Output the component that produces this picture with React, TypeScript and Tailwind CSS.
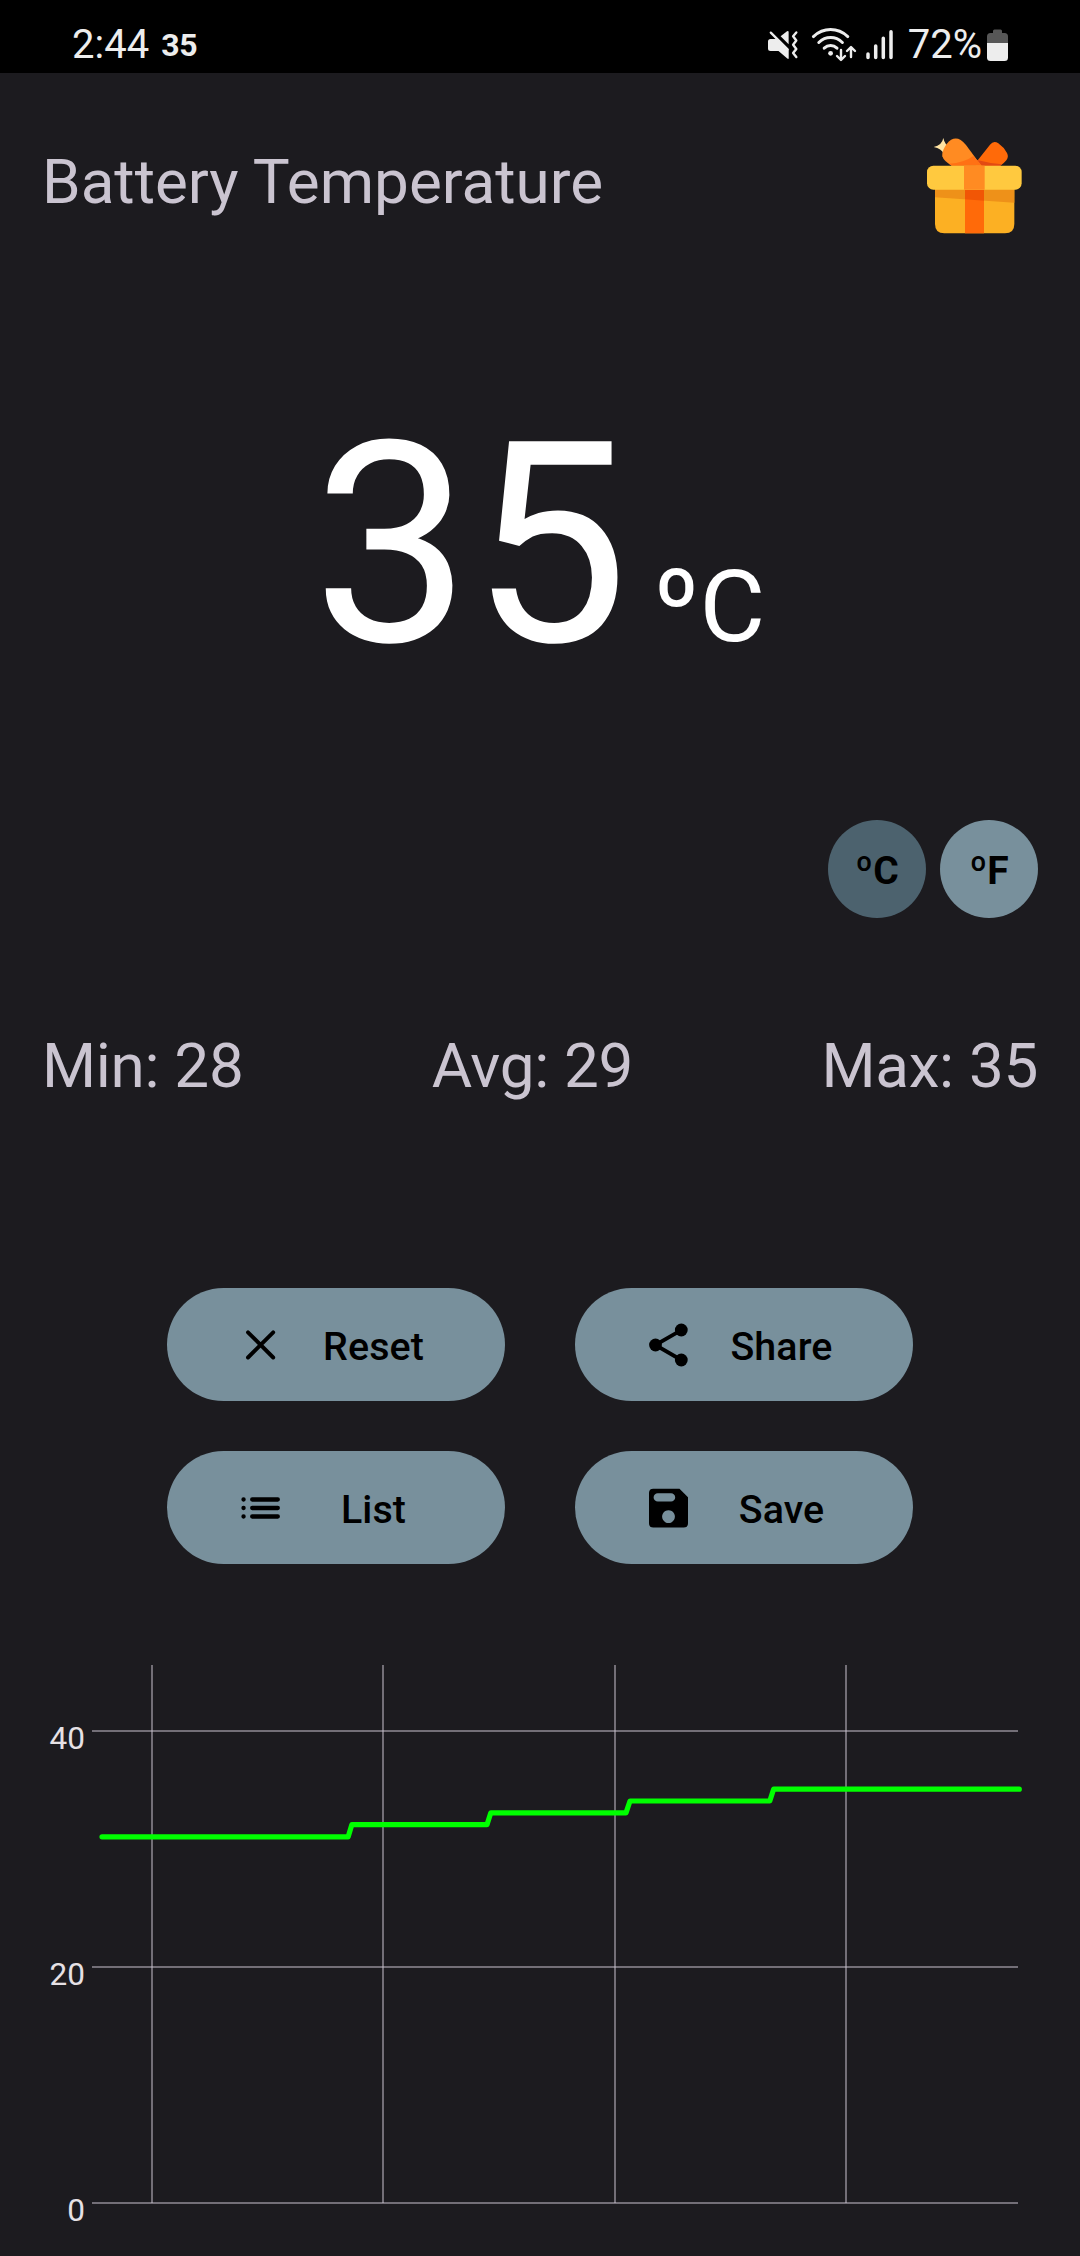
import type { ReactNode } from "react";

const stats = ["Min: 28", "Avg: 29", "Max: 35"];

const gridX = [152, 383, 615, 846];

const gridY = [
  { label: "40", y: 1731 },
  { label: "20", y: 1967 },
  { label: "0", y: 2203 },
];

const readings =
  "102,1836.8 348.2,1836.8 351.8,1824.7 487,1824.7 490.8,1812.8 626,1812.8 630,1801 769.8,1801 773.6,1789.2 1019.3,1789.2";

function StatusIcons() {
  return (
    <svg className="h-[38px] w-[132px]" viewBox="764 26 132 38" fill="none" stroke="#ededed" strokeLinecap="round">
      {/* muted, vibrate */}
      <g fill="#ededed" stroke="none">
        <path d="M780.6 36.3 787 31.300q1.600-1 1.600.8v12.200z" />
        <path d="M770.500 39H777.500L788.700 49.600V58q0 1.600-1.400.6L778.500 51h-8q-2.500 0-2.500-2.500v-7q0-2.500 2.500-2.500z" />
      </g>
      <path d="M770.8 32.6 787.600 49.400" strokeWidth="2.300" />
      <path d="M796.3 32.5l-3.2 3.8 3.2 4.2-3.2 4.2 3.2 4.2-3.2 4.2 3.2 4" strokeWidth="2.4" strokeLinejoin="round" />

      {/* wifi */}
      <g strokeWidth="3">
        <path d="M813.4 36.6Q821 29.6 830.6 29.6T847.8 36.6" />
        <path d="M818.8 42.5Q824 37.6 830.6 37.6T842.4 42.5" />
        <path d="M824.2 48.2Q827 45.6 830.6 45.6T837 48.2" />
      </g>
      <circle cx="830.6" cy="53.3" r="2.4" fill="#ededed" stroke="none" />
      <g strokeWidth="2.4" strokeLinejoin="round">
        <path d="M841 50v9.6M837 56l4 4 4-4" />
        <path d="M851 57V47.4M847 51l4-4 4 4" />
      </g>

      {/* signal */}
      <path d="M868 54v3.4M875.7 46v11.4M883.3 38.3v19.1M891 31.7v25.7" strokeWidth="3.5" />
    </svg>
  );
}

function BatteryLevel() {
  return (
    <svg className="h-8 w-[21px]" viewBox="987 29 21 32">
      <path d="M993 33v-2q0-1.5 1.5-1.5h6q1.5 0 1.5 1.5v2h2.5q3.5 0 3.5 3.5V43h-21v-6.500q0-3.500 3.500-3.500z" fill="#575757" />
      <path d="M987 43h21v14.500q0 3.500-3.500 3.500h-14q-3.500 0-3.500-3.500z" fill="#ededed" />
    </svg>
  );
}

function Gift() {
  return (
    <svg className="h-[97px] w-24" viewBox="81 49 288 291">
      <path d="M130 52q4 20 20 28-16 6-20 18-5-14-29-19 25-5 29-27z" fill="#ffe4a3" />
      <path d="M232 120l38-48q11-14 25-4 16 11 26 29 6 12-2 22-6 8-18 16h-70z" fill="#ff6a09" />
      <path d="M232 118q36 10 74 13l-7 5h-72z" fill="#e34a12" />
      <path d="M155 135q-24-14-28-28-2-16 13-37 20-25 42-12 9 6 16 15l46 62z" fill="#ff8b22" />
      <path d="M155 135l-8-6q45-2 73-23l26 29z" fill="#ff7114" />
      <path d="M105 200h238v110q0 28-28 28H133q-28 0-28-28z" fill="#fcb023" />
      <path d="M105 200h238v46l-238-16z" fill="#ee9119" />
      <path d="M195 200h57v138h-57z" fill="#ff6a09" />
      <path d="M195 200h57v40l-57-4z" fill="#f15605" />
      <rect x="81" y="135" width="284" height="72" rx="19" fill="#ffc93f" />
      <path d="M192 135h62v72h-62z" fill="#ff8b22" />
    </svg>
  );
}

const actions: { label: string; icon: ReactNode }[] = [
  {
    label: "Reset",
    icon: <path d="M13 13.300 38.200 38.500M38.200 13.300 13 38.500" fill="none" stroke="#000" strokeWidth="3.900" strokeLinecap="round" />,
  },
  {
    label: "Share",
    icon: (
      <>
        <path d="M38.300 11.200 12.300 26l26 15" fill="none" stroke="#000" strokeWidth="3.800" />
        <circle cx="38.300" cy="11" r="6.400" />
        <circle cx="12.500" cy="26" r="6.400" />
        <circle cx="38.300" cy="41" r="6.400" />
      </>
    ),
  },
  {
    label: "List",
    icon: (
      <g stroke="#000" strokeWidth="4.300" strokeLinecap="round">
        <path d="M8.500 17.500h.1M8.500 26h.1M8.500 34.500h.1" />
        <path d="M17.200 17.500h25.600M17.200 26h25.600M17.200 34.500h25.600" />
      </g>
    ),
  },
  {
    label: "Save",
    icon: (
      <path
        fillRule="evenodd"
        d="M10.300 6.800H36.500L45 15.300V41.200q0 4.300-4.300 4.300H10.300Q6 45.500 6 41.200V11.100Q6 6.800 10.300 6.800zM14.800 11.200a4.200 4.200 0 0 0 0 8.400H28a4.200 4.200 0 0 0 0-8.400zM25.500 28.200a6.400 6.400 0 1 0 .01 0z"
      />
    ),
  },
];

function Chart() {
  return (
    <svg className="mt-[86px] block h-[606px] w-full" viewBox="0 1650 1080 606">
      <g stroke="#cac4d0" strokeOpacity="0.5" strokeWidth="2">
        {gridY.map(({ y }) => (
          <line key={y} x1="92" x2="1018" y1={y} y2={y} />
        ))}
        {gridX.map((x) => (
          <line key={x} x1={x} x2={x} y1="1665" y2="2203" />
        ))}
      </g>
      {gridY.map(({ label, y }) => (
        <text key={label} x="85" y={y + 18} textAnchor="end" fontSize="31.500" fill="#e6e1e5">
          {label}
        </text>
      ))}
      <polyline points={readings} fill="none" stroke="#00ff00" strokeWidth="5.200" strokeLinecap="round" strokeLinejoin="round" />
    </svg>
  );
}

export default function App() {
  return (
    <div className="h-[2256px] w-[1080px] overflow-hidden bg-[#1c1b1f] font-['Roboto',sans-serif] text-[#cac4d0]">
      <div className="flex h-[73px] items-start justify-between bg-black pr-[72px] pl-[72px] text-[#ededed]">
        <div className="flex items-start gap-3">
          <span className="pt-[25px] text-[40px] leading-none">2:44</span>
          <span className="pt-[29px] text-[32px] leading-none font-bold tracking-[-0.2px]">35</span>
        </div>
        <div className="flex items-start">
          <div className="mr-3 pt-[26px]">
            <StatusIcons />
          </div>
          <span className="mr-[5px] pt-[25px] text-[40px] leading-none">72%</span>
          <div className="pt-[29px]">
            <BatteryLevel />
          </div>
        </div>
      </div>

      <header className="flex h-[332px] items-start justify-between pt-16 pr-[57px] pl-[42px]">
        <h1 className="mt-3.5 text-[62px] leading-none">Battery Temperature</h1>
        <Gift />
      </header>

      <div className="flex h-[281px] items-baseline justify-center pr-0.5 text-white">
        <span className="text-[281px] leading-none">35</span>
        <span className="ml-[25px] text-[101px] leading-none">ºC</span>
      </div>

      <div className="mt-[134px] flex justify-end gap-3.5 pr-[42px] text-[39px] font-bold text-black">
        <button className="size-[98px] rounded-full bg-[#4c626e] pt-1 leading-none">ºC</button>
        <button className="size-[98px] rounded-full bg-[#78909c] pt-1 leading-none">ºF</button>
      </div>

      <div className="mt-[117px] flex justify-between px-[42px] text-[62px] leading-none tracking-[-0.3px]">
        {stats.map((stat) => (
          <span key={stat}>{stat}</span>
        ))}
      </div>

      <div className="mt-[191px] ml-[167px] grid w-[746px] grid-cols-2 gap-x-[70px] gap-y-[50px]">
        {actions.map(({ label, icon }) => (
          <button key={label} className="flex h-[113px] items-center rounded-full bg-[#78909c] pr-[45px] pl-[68px] text-black">
            <svg className="size-[52px]" viewBox="0 0 52 52">
              {icon}
            </svg>
            <span className="flex-1 pt-[5px] text-center text-[39.4px] leading-none font-medium tracking-[0.1px]">{label}</span>
          </button>
        ))}
      </div>

      <Chart />
    </div>
  );
}
